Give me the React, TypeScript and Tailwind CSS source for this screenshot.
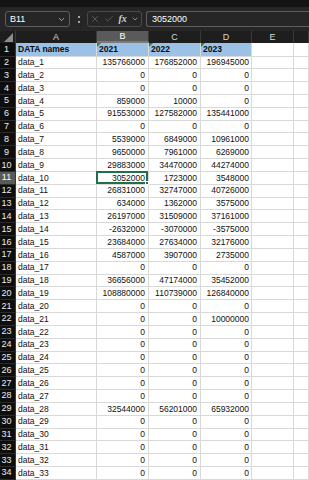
import { ChevronDown, X, Check } from "lucide-react"

const rows: [string, string, string, string][] = [
  ["data_1", "135766000", "176852000", "196945000"],
  ["data_2", "0", "0", "0"],
  ["data_3", "0", "0", "0"],
  ["data_4", "859000", "10000", "0"],
  ["data_5", "91553000", "127582000", "135441000"],
  ["data_6", "0", "0", "0"],
  ["data_7", "5539000", "6849000", "10961000"],
  ["data_8", "9650000", "7961000", "6269000"],
  ["data_9", "29883000", "34470000", "44274000"],
  ["data_10", "3052000", "1723000", "3548000"],
  ["data_11", "26831000", "32747000", "40726000"],
  ["data_12", "634000", "1362000", "3575000"],
  ["data_13", "26197000", "31509000", "37161000"],
  ["data_14", "-2632000", "-3070000", "-3575000"],
  ["data_15", "23684000", "27634000", "32176000"],
  ["data_16", "4587000", "3907000", "2735000"],
  ["data_17", "0", "0", "0"],
  ["data_18", "36656000", "47174000", "35452000"],
  ["data_19", "108880000", "110739000", "126840000"],
  ["data_20", "0", "0", "0"],
  ["data_21", "0", "0", "10000000"],
  ["data_22", "0", "0", "0"],
  ["data_23", "0", "0", "0"],
  ["data_24", "0", "0", "0"],
  ["data_25", "0", "0", "0"],
  ["data_26", "0", "0", "0"],
  ["data_27", "0", "0", "0"],
  ["data_28", "32544000", "56201000", "65932000"],
  ["data_29", "0", "0", "0"],
  ["data_30", "0", "0", "0"],
  ["data_31", "0", "0", "0"],
  ["data_32", "0", "0", "0"],
  ["data_33", "0", "0", "0"],
]

const cols = [
  { label: "A", w: "w-[81px]" },
  { label: "B", w: "w-[52px]" },
  { label: "C", w: "w-[52px]" },
  { label: "D", w: "w-[51px]" },
  { label: "E", w: "w-[42px]" },
  { label: "", w: "flex-1" },
]

const cell = "h-full shrink-0 border-r border-b border-[#d9d9d9] flex items-center overflow-hidden whitespace-nowrap relative"

function RowNum({ n, active }: { n?: number; active?: boolean }) {
  return (
    <div
      className={
        "w-[16px] h-full shrink-0 flex items-center justify-center pr-[2px] text-[9px] border-b border-[#2a2a2a] border-r border-r-[#3a3a3a] " +
        (active ? "bg-[#5a5a5a] text-white" : "bg-[#0e0e0e] text-[#ececec]")
      }
    >
      {n}
    </div>
  )
}

function Flag() {
  return <div className="absolute left-0 top-0 w-0 h-0 border-t-[4px] border-t-[#1e8a3c] border-r-[4px] border-r-transparent" />
}

export default function App() {
  return (
    <div className="w-[309px] h-[480px] overflow-hidden bg-[#262626] text-[8.5px] leading-none" style={{ fontFamily: "'Liberation Sans', Arial, sans-serif" }}>
      <div className="h-[7px] bg-[#141414]" />

      {/* formula bar */}
      <div className="h-[24px] flex items-center pl-[5px] gap-[4px]">
        <div className="w-[65px] h-[16px] rounded-[3px] border border-[#5e5e5e] flex items-center justify-between pl-[4px] pr-[3px] text-white text-[9px]">
          <span>B11</span>
          <ChevronDown className="w-[9px] h-[9px] text-[#cfcfcf]" strokeWidth={2} />
        </div>
        <div className="w-[9px] flex flex-col items-center gap-[3px]">
          <div className="w-[2px] h-[2px] rounded-full bg-[#cfcfcf]" />
          <div className="w-[2px] h-[2px] rounded-full bg-[#cfcfcf]" />
        </div>
        <div className="w-[55px] h-[16px] rounded-[3px] border border-[#4a4a4a] flex items-center justify-between px-[2px] text-[#777]">
          <X className="w-[10px] h-[10px]" strokeWidth={1.5} />
          <Check className="w-[10px] h-[10px]" strokeWidth={1.5} />
          <span className="text-[#d0d0d0] italic text-[10px] font-bold" style={{ fontFamily: "'Liberation Serif', serif" }}>fx</span>
          <ChevronDown className="w-[8px] h-[8px] text-[#bdbdbd]" strokeWidth={2} />
        </div>
        <div className="flex-1 h-[16px] rounded-l-[3px] border border-r-0 border-[#5e5e5e] flex items-center pl-[5px] text-white text-[9px]">
          3052000
        </div>
      </div>

      {/* column headers */}
      <div className="h-[12px] flex bg-[#1e1e1e] text-[#d8d8d8] text-[9px]">
        <div className="w-[16px] shrink-0 h-full relative border-r border-[#3a3a3a]">
          <div className="absolute right-[2px] bottom-[1px] w-0 h-0 border-b-[9px] border-b-[#8c8c8c] border-l-[9px] border-l-transparent" />
        </div>
        {cols.map((c) => (
          <div
            key={c.label || "F"}
            className={
              c.w +
              " shrink-0 h-full flex items-center justify-center border-r border-[#3a3a3a] " +
              (c.label === "B" ? "bg-[#5a5a5a] text-white border-b-[2px] border-b-[#7a7a7a]" : "")
            }
          >
            {c.label}
          </div>
        ))}
      </div>

      {/* sheet */}
      <div className="bg-white text-[#111]">
        <div className="h-[13.5px] flex">
          <RowNum n={1} />
          <div className={cell + " w-[81px] bg-[#9bc2e6] pl-[2px] font-bold text-[#0a0a0a]"}>DATA names</div>
          <div className={cell + " w-[52px] bg-[#9bc2e6] pl-[2px] font-bold text-[#0a0a0a]"}>
            <Flag />
            2021
          </div>
          <div className={cell + " w-[52px] bg-[#9bc2e6] pl-[2px] font-bold text-[#0a0a0a]"}>
            <Flag />
            2022
          </div>
          <div className={cell + " w-[51px] bg-[#9bc2e6] pl-[2px] font-bold text-[#0a0a0a]"}>
            <Flag />
            2023
          </div>
          <div className={cell + " w-[42px]"} />
          <div className={cell + " flex-1"} />
        </div>

        {rows.map((r, i) => {
          const n = i + 2
          const sel = n === 11
          return (
            <div key={n} className="h-[12.83px] flex">
              <RowNum n={n} active={sel} />
              <div className={cell + " w-[81px] pl-[2px]"}>{r[0]}</div>
              <div className={cell + " w-[52px] justify-end pr-[3px] " + (sel ? "overflow-visible z-10" : "")}>
                {r[1]}
                {sel && (
                  <div className="absolute -left-[1px] -top-[1px] right-0 bottom-0 border-2 border-[#1e7145]">
                    <div className="absolute -right-[3px] -bottom-[3px] w-[4px] h-[4px] bg-[#1e7145] border border-white" />
                  </div>
                )}
              </div>
              <div className={cell + " w-[52px] justify-end pr-[3px]"}>{r[2]}</div>
              <div className={cell + " w-[51px] justify-end pr-[2px]"}>{r[3]}</div>
              <div className={cell + " w-[42px]"} />
              <div className={cell + " flex-1"} />
            </div>
          )
        })}

        <div className="h-[12.83px] flex">
          <RowNum />
          <div className={cell + " w-[81px]"} />
          <div className={cell + " w-[52px]"} />
          <div className={cell + " w-[52px]"} />
          <div className={cell + " w-[51px]"} />
          <div className={cell + " w-[42px]"} />
          <div className={cell + " flex-1"} />
        </div>
      </div>
    </div>
  )
}
